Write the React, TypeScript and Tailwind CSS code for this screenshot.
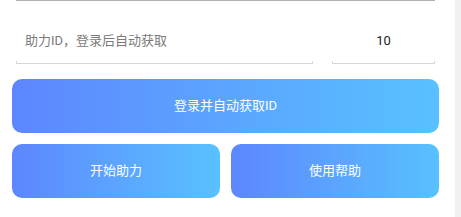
import React from 'react';

const cjk = { fontFamily: 'Roboto, "Noto Sans CJK SC", sans-serif' };

function Field({ width, placeholder, value }: { width: string; placeholder?: string; value?: string }) {
  return (
    <div className={`${width} flex flex-col`}>
      <div className="h-[40px] flex items-center">
        {value ? (
          <span className="w-full text-center text-[13px] text-[#222]">{value}</span>
        ) : (
          <span className="pl-[9px] text-[13px] text-[#7a7a7a]">{placeholder}</span>
        )}
      </div>
      {/* underline with small end ticks */}
      <div className="h-[3px] border-x border-b border-[#d6d6d6]" />
    </div>
  );
}

function GradientButton({ label, className }: { label: string; className: string }) {
  return (
    <button
      className={`${className} h-[54px] rounded-[10px] bg-gradient-to-r from-[#5d86ff] to-[#58c1ff] text-white text-[13px] flex items-center justify-center`}
    >
      {label}
    </button>
  );
}

export default function App() {
  return (
    <div className="flex w-[461px] h-[217px] bg-white overflow-hidden" style={cjk}>
      <div className="w-[455px] flex flex-col">
        <div className="ml-4 w-[419px] h-px bg-[#b0b0b0]" />

        {/* ID + count */}
        <div className="mt-[20px] ml-4 flex gap-[19px]">
          <Field width="w-[297px]" placeholder="助力ID，登录后自动获取" />
          <Field width="w-[103px]" value="10" />
        </div>

        <div className="mt-[15px] px-3">
          <GradientButton label="登录并自动获取ID" className="w-[427px]" />
        </div>

        <div className="mt-[11px] px-3 flex gap-[11px]">
          <GradientButton label="开始助力" className="w-[208px]" />
          <GradientButton label="使用帮助" className="w-[208px]" />
        </div>
      </div>
      <div className="w-[6px] h-full bg-[#f1f1f1]" />
    </div>
  );
}
